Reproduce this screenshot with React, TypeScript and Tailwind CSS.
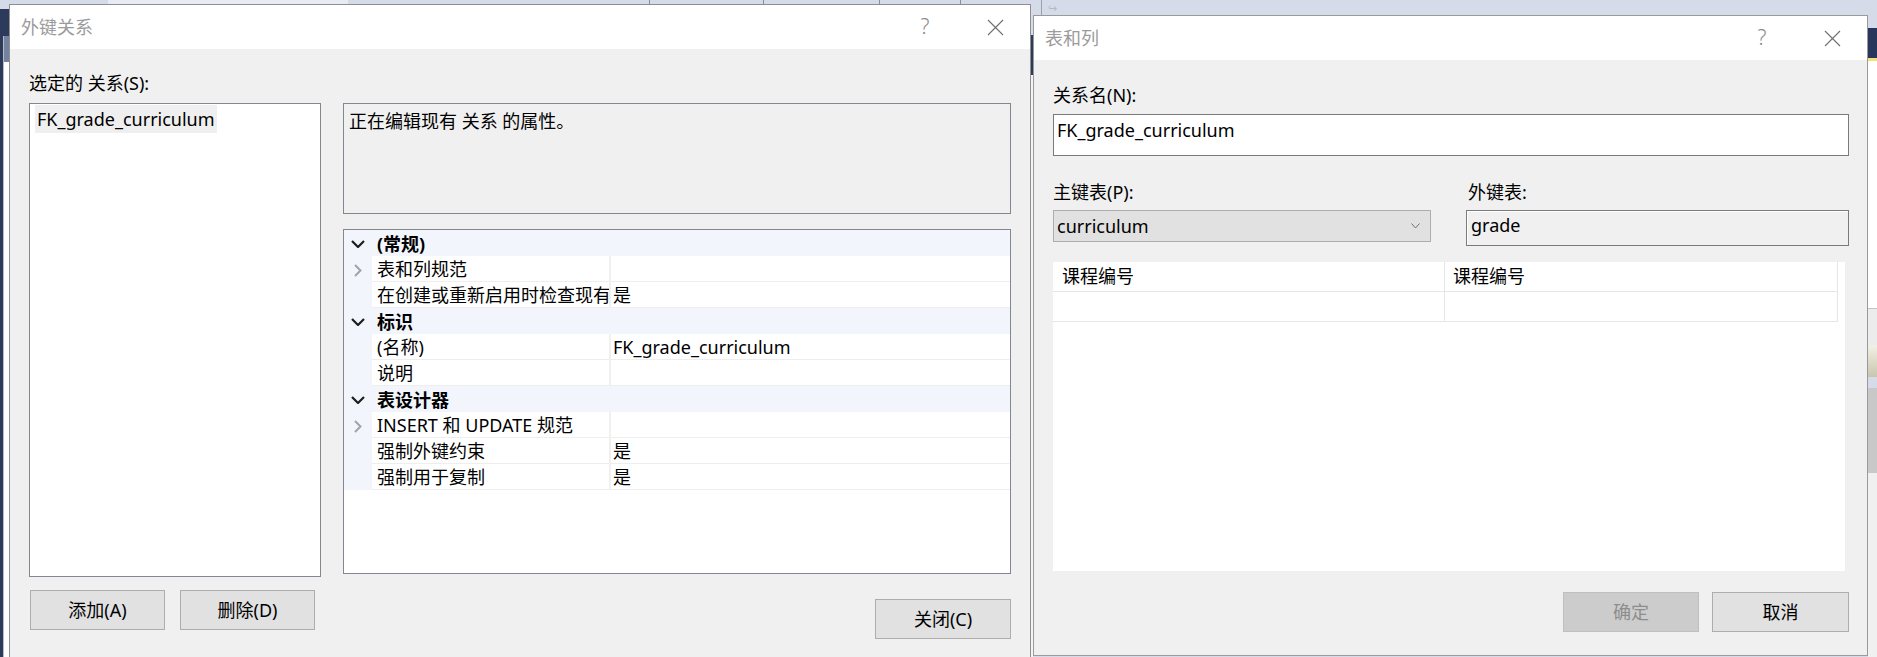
import React from "react";

const font = "font-['Noto_Sans','Noto_Sans_CJK_SC',sans-serif]";

function TitleBar({ title }: { title: string }) {
  return (
    <div className="h-[44px] bg-white flex items-center shrink-0">
      <span className="pl-[11px] text-[18px] text-[#9b9b9b]">{title}</span>
      <div className="ml-auto flex h-full">
        <div className="w-[70px] h-full flex items-center justify-center text-[21px] font-light text-[#8a8a8a]">?</div>
        <div className="w-[70px] h-full flex items-center justify-center">
          <svg width="17" height="17" viewBox="0 0 17 17">
            <path d="M1 1 L16 16 M16 1 L1 16" stroke="#6f6f6f" strokeWidth="1.1" fill="none" />
          </svg>
        </div>
      </div>
    </div>
  );
}

function WinButton({ label, className = "", disabled = false }: { label: string; className?: string; disabled?: boolean }) {
  return (
    <div
      className={`h-[40px] flex items-center justify-center text-[18px] border ${
        disabled ? "bg-[#cccccc] border-[#bfbfbf] text-[#8d8d8d]" : "bg-[#e1e1e1] border-[#adadad] text-black"
      } ${className}`}
    >
      {label}
    </div>
  );
}

function ChevronDown() {
  return (
    <svg width="14" height="8" viewBox="0 0 14 8">
      <path d="M1 1 L7 7 L13 1" stroke="#1e1e1e" strokeWidth="2.2" fill="none" />
    </svg>
  );
}

function ChevronRight() {
  return (
    <svg width="8" height="13" viewBox="0 0 8 13">
      <path d="M1 1 L6.5 6.5 L1 12" stroke="#a3a3a3" strokeWidth="2" fill="none" />
    </svg>
  );
}

type Row =
  | { kind: "cat"; label: string }
  | { kind: "prop"; label: string; value?: string; expandable?: boolean };

const rows: Row[] = [
  { kind: "cat", label: "(常规)" },
  { kind: "prop", label: "表和列规范", expandable: true },
  { kind: "prop", label: "在创建或重新启用时检查现有数据", value: "是" },
  { kind: "cat", label: "标识" },
  { kind: "prop", label: "(名称)", value: "FK_grade_curriculum" },
  { kind: "prop", label: "说明" },
  { kind: "cat", label: "表设计器" },
  { kind: "prop", label: "INSERT 和 UPDATE 规范", expandable: true },
  { kind: "prop", label: "强制外键约束", value: "是" },
  { kind: "prop", label: "强制用于复制", value: "是" },
];

function PropertyGrid() {
  return (
    <div className="mt-[15px] h-[345px] border border-[#828790] bg-white text-[18px]">
      {rows.map((r, i) =>
        r.kind === "cat" ? (
          <div key={i} className="h-[26px] flex bg-[#f2f5fb]">
            <div className="w-[28px] pt-[2px] flex items-center justify-center">
              <ChevronDown />
            </div>
            <div className="pl-[5px] pt-[2px] leading-[24px] font-bold">{r.label}</div>
          </div>
        ) : (
          <div key={i} className="h-[26px] flex">
            <div className="w-[28px] pt-[2px] bg-[#f2f5fb] flex items-center justify-center">
              {r.expandable && <ChevronRight />}
            </div>
            <div className="w-[237px] border-b border-[#eeeeee] pl-[5px] pt-[2px] leading-[23px] whitespace-nowrap overflow-hidden">
              {r.label}
            </div>
            <div className="w-[2px] bg-[#f0f0f0]" />
            <div className="flex-1 border-b border-[#eeeeee] pl-[2px] pt-[2px] leading-[23px] whitespace-nowrap overflow-hidden">
              {r.value ?? ""}
            </div>
          </div>
        )
      )}
    </div>
  );
}

function Backdrop() {
  return (
    <>
      {/* left edge of the app behind */}
      <div className="absolute left-0 top-[9px] w-[9px] h-[27px] bg-[#2c3a5c]" />
      <div className="absolute left-0 top-[36px] w-[3px] bottom-0 bg-[#2c3a5c]" />
      <div className="absolute left-[3px] top-[36px] w-[6px] bottom-0 bg-white border-l border-[#bcbcbc]">
        <div className="h-[26px] bg-[#7282a0]" />
      </div>
      {/* top toolbar ticks */}
      <div className="absolute left-[108px] top-0 w-[240px] h-[4px] bg-[#e8ebf3]" />
      <div className="absolute left-[649px] top-0 w-[1px] h-[4px] bg-[#8a8f9c]" />
      <div className="absolute left-[763px] top-0 w-[1px] h-[4px] bg-[#8a8f9c]" />
      <div className="absolute left-[879px] top-0 w-[1px] h-[4px] bg-[#8a8f9c]" />
      <div className="absolute left-[960px] top-0 w-[1px] h-[4px] bg-[#8a8f9c]" />
      {/* gap between dialogs */}
      <div className="absolute left-[1031px] top-[35px] w-[2px] h-[40px] bg-[#2c3a5c]" />
      <div className="absolute left-[1031px] top-[75px] w-[2px] bottom-0 bg-[#f4f4f4]" />
      <div className="absolute left-[1041px] top-0 w-[1px] h-[15px] bg-[#9aa0ae]" />
      <div className="absolute left-[1048px] top-[2px] w-[16px] h-[12px] text-[11px] leading-[12px] text-[#b5bac6]">↪</div>
      {/* right edge of the app behind */}
      <div className="absolute left-[1868px] top-[28px] w-[9px] h-[30px] bg-[#27365a]" />
      <div className="absolute left-[1868px] top-[58px] w-[9px] h-[3px] bg-[#f3e07c]" />
      <div className="absolute left-[1868px] top-[61px] w-[9px] h-[247px] bg-white" />
      <div className="absolute left-[1868px] top-[308px] w-[9px] h-[37px] bg-[#ececec] border-t border-[#c4c4c4]" />
      <div className="absolute left-[1868px] top-[345px] w-[9px] h-[32px] bg-gradient-to-b from-[#f3f1e6] to-[#c9c5ad]" />
      <div className="absolute left-[1868px] top-[388px] w-[9px] h-[85px] bg-[#c8c8c8]" />
      <div className="absolute left-[1868px] top-[473px] w-[9px] bottom-0 bg-[#f0f0f0]" />
    </>
  );
}

export default function App() {
  return (
    <div className={`relative w-[1877px] h-[657px] overflow-hidden bg-[#d5dbe9] text-black ${font}`}>
      <Backdrop />

      {/* 外键关系 dialog */}
      <div className="absolute left-[9px] top-[4px] w-[1022px] h-[670px] border border-[#8f8f8f] bg-[#f0f0f0] flex flex-col">
        <TitleBar title="外键关系" />
        <div className="flex items-start gap-[22px] pl-[19px] pt-[22px]">
          <div className="w-[292px] flex flex-col">
            <div className="h-[24px] leading-[24px] text-[18px]">选定的 关系(S):</div>
            <div className="mt-[8px] h-[474px] border border-[#828790] bg-white pt-[1px] pl-[5px]">
              <div className="inline-block h-[28px] leading-[28px] px-[2px] bg-[#efefef] text-[18px]">FK_grade_curriculum</div>
            </div>
            <div className="mt-[13px] ml-[1px] flex gap-[15px]">
              <WinButton label="添加(A)" className="w-[135px]" />
              <WinButton label="删除(D)" className="w-[135px]" />
            </div>
          </div>

          <div className="w-[668px] mt-[32px] flex flex-col">
            <div className="h-[111px] border border-[#828790] bg-[#f0f0f0] pl-[5px] pt-[5px] text-[18px] leading-[24px]">
              正在编辑现有 关系 的属性。
            </div>
            <PropertyGrid />
            <WinButton label="关闭(C)" className="mt-[25px] self-end w-[136px]" />
          </div>
        </div>
      </div>

      {/* 表和列 dialog */}
      <div className="absolute left-[1033px] top-[15px] w-[835px] h-[641px] border border-[#9a9a9a] bg-[#f0f0f0] flex flex-col">
        <TitleBar title="表和列" />
        <div className="flex flex-col pl-[19px] pr-[18px] pt-[23px] text-[18px]">
          <div className="h-[24px] leading-[24px]">关系名(N):</div>
          <div className="mt-[7px] h-[42px] border border-[#7a7a7a] bg-white pl-[3px] pt-[3px] leading-[24px]">
            FK_grade_curriculum
          </div>

          <div className="mt-[24px] flex gap-[35px]">
            <div className="w-[378px] h-[24px] leading-[24px]">主键表(P):</div>
            <div className="pl-[2px] h-[24px] leading-[24px]">外键表:</div>
          </div>
          <div className="mt-[6px] flex items-start gap-[35px] h-[36px]">
            <div className="w-[378px] h-[32px] border border-[#adadad] bg-[#e1e1e1] flex items-center pl-[3px]">
              <span>curriculum</span>
              <svg className="ml-auto mr-[10px]" width="9" height="6" viewBox="0 0 9 6">
                <path d="M0.5 0.5 L4.5 5 L8.5 0.5" stroke="#707070" strokeWidth="1" fill="none" />
              </svg>
            </div>
            <div className="flex-1 h-[36px] border border-[#7a7a7a] bg-[#f0f0f0] shadow-[inset_1px_1px_0_#ffffff] flex items-center pl-[4px] pb-[5px]">
              grade
            </div>
          </div>

          <div className="mt-[16px] mr-[4px] h-[309px] bg-white">
            <div className="w-[785px]">
              <div className="h-[30px] flex border-b border-r border-[#e6e6e6]">
                <div className="w-[392px] border-r border-[#e6e6e6] pl-[9px] leading-[29px]">课程编号</div>
                <div className="flex-1 pl-[8px] leading-[29px]">课程编号</div>
              </div>
              <div className="h-[30px] flex border-b border-r border-[#e6e6e6]">
                <div className="w-[392px] border-r border-[#e6e6e6]" />
                <div className="flex-1" />
              </div>
            </div>
          </div>

          <div className="mt-[21px] flex justify-end gap-[13px]">
            <WinButton label="确定" className="w-[136px]" disabled />
            <WinButton label="取消" className="w-[137px]" />
          </div>
        </div>
      </div>
    </div>
  );
}
